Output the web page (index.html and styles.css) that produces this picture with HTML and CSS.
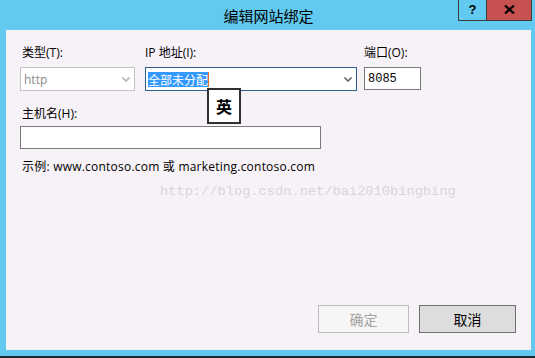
FILE: index.html
```html
<!DOCTYPE html>
<html lang="zh-CN">
<head>
<meta charset="utf-8">
<title>编辑网站绑定</title>
<link rel="stylesheet" href="styles.css">
</head>
<body>
<div class="window">
  <header class="titlebar">
    <div class="spacer"></div>
    <div class="title">编辑网站绑定</div>
    <div class="controls">
      <div class="btn-help">?</div>
      <div class="btn-close"><svg width="11" height="9" viewBox="0 0 11 9"><path d="M1 0.5 L10 8.5 M10 0.5 L1 8.5" stroke="#000" stroke-width="2.2" fill="none"/></svg></div>
    </div>
  </header>
  <main class="client">
    <div class="row">
      <div class="field f-type">
        <label class="lbl lbl-type">类型(T):</label>
        <div class="select disabled"><span>http</span><svg class="chev" width="8" height="5" viewBox="0 0 8 5"><path d="M0.5 0.5 L4 4 L7.5 0.5" stroke="#b4b4b4" stroke-width="1.6" fill="none"/></svg></div>
      </div>
      <div class="field f-ip">
        <label class="lbl">IP 地址(I):</label>
        <div class="select focused"><span class="sel-text">全部未分配</span><span class="caret"></span><svg class="chev" width="8" height="5" viewBox="0 0 8 5"><path d="M0.5 0.5 L4 4 L7.5 0.5" stroke="#6d6d6d" stroke-width="1.6" fill="none"/></svg></div>
      </div>
      <div class="field f-port">
        <label class="lbl">端口(O):</label>
        <div class="input port">8085</div>
      </div>
    </div>
    <div class="field f-host">
      <label class="lbl lbl-type">主机名(H):</label>
      <div class="input host"></div>
    </div>
    <p class="example">示例: www.contoso.com 或 marketing.contoso.com</p>
    <p class="watermark">http://blog.csdn.net/bai2010bingbing</p>
    <div class="footer">
      <div class="button ok">确定</div>
      <div class="button cancel">取消</div>
    </div>
    <div class="ime">英</div>
  </main>
  <div class="frame-bottom"></div>
</div>
</body>
</html>
```
FILE: styles.css
```css
* { box-sizing: border-box; }
html, body { margin: 0; padding: 0; }
body {
  width: 535px;
  height: 358px;
  overflow: hidden;
  background: #62caf0;
  font-family: "Segoe UI", "Open Sans", "Noto Sans CJK SC", sans-serif;
}
.window {
  width: 535px;
  height: 358px;
  display: flex;
  flex-direction: column;
  background: #62caf0;
}
.titlebar {
  height: 30px;
  display: grid;
  grid-template-columns: 1fr auto 1fr;
  align-items: start;
}
.title {
  font-family: "Noto Sans CJK SC", sans-serif;
  font-size: 15px;
  line-height: 20px;
  padding-top: 6px;
  color: #000;
  padding-left: 2px;
}
.controls {
  justify-self: end;
  display: flex;
  margin-right: 3px;
  height: 21px;
}
.btn-help {
  width: 28px;
  height: 21px;
  border: 1px solid #3d3d3d;
  border-top: none;
  border-right: none;
  background: #62caf0;
  font-family: "Liberation Sans", sans-serif;
  font-weight: bold;
  font-size: 13px;
  line-height: 19px;
  text-align: center;
  color: #000;
}
.btn-close {
  width: 46px;
  height: 21px;
  border: 1px solid #3d3d3d;
  border-top: none;
  background: #c75050;
  display: flex;
  align-items: center;
  justify-content: center;
  padding-bottom: 1px;
}
.client {
  position: relative;
  flex: 1;
  margin: 0 4px 0 6px;
  background: #f7f2f7;
  display: flex;
  flex-direction: column;
  padding: 15px 15px 17px 14px;
}
.frame-bottom {
  height: 8px;
  border-top: 6px solid #62caf0;
  background: #1e2a30;
}
.row {
  display: flex;
  align-items: flex-start;
}
.field {
  display: flex;
  flex-direction: column;
}
.f-type { width: 115px; margin-right: 10px; }
.f-ip { width: 212px; margin-right: 7px; }
.f-port { width: 57px; }
.lbl {
  font-family: "Segoe UI", "Open Sans", "Noto Sans CJK SC", sans-serif;
  font-size: 12px;
  line-height: 16px;
  height: 16px;
  color: #000;
  margin-bottom: 6px;
  white-space: nowrap;
}
.lbl-type { padding-left: 2px; }
.select, .input {
  height: 24px;
  background: #fff;
  display: flex;
  align-items: center;
  font-size: 12px;
}
.select.disabled {
  border: 1px solid #c3c3c3;
  color: #8a8a8a;
  padding-left: 3px;
  font-family: "Open Sans", sans-serif;
}
.select .chev { margin-left: auto; margin-right: 4px; }
.select.focused {
  border: 1px solid #2d5f8f;
  padding-left: 2px;
}
.sel-text {
  background: #3399ff;
  color: #fff;
  font-family: "Noto Sans CJK SC", sans-serif;
  font-size: 12px;
  line-height: 15px;
  height: 15px;
  display: flex;
  align-items: center;
}
.caret {
  width: 1px;
  height: 15px;
  background: #e07020;
}
.input.port {
  height: 23px;
  border: 1px solid #7a7a7a;
  padding-left: 3px;
  font-family: "Liberation Mono", "DejaVu Sans Mono", monospace;
  font-size: 12px;
  color: #000;
}
.f-host { margin-top: 15px; width: 301px; }
.f-host .lbl { margin-bottom: 4px; }
.input.host {
  height: 23px;
  border: 1px solid #7a7a7a;
}
.example {
  margin: 10px 0 0 2px;
  font-size: 12px;
  line-height: 16px;
  color: #000;
  font-family: "Open Sans", "Noto Sans CJK SC", sans-serif;
  letter-spacing: 0.22px;
  white-space: nowrap;
}
.watermark {
  margin: 9px 0 0 140px;
  font-family: "Liberation Mono", "DejaVu Sans Mono", monospace;
  font-size: 13.7px;
  line-height: 16px;
  color: #d9d4d9;
}
.footer {
  margin-top: auto;
  display: flex;
  justify-content: flex-end;
  gap: 10px;
}
.button {
  height: 28px;
  display: flex;
  align-items: center;
  justify-content: center;
  font-family: "Noto Sans CJK SC", sans-serif;
  font-size: 14px;
}
.button.ok {
  width: 91px;
  border: 1px solid #bcbcbc;
  background: #f6f6f6;
  color: #a2a2a2;
}
.button.cancel {
  width: 97px;
  border: 1px solid #707070;
  background: #dddddd;
  color: #000;
}
.ime {
  position: absolute;
  left: 201px;
  top: 58px;
  width: 34px;
  height: 36px;
  border: 2px solid #303030;
  background: #fff;
  font-family: "Noto Sans CJK SC", sans-serif;
  font-weight: bold;
  font-size: 16px;
  display: flex;
  align-items: center;
  justify-content: center;
  color: #000;
}
```
